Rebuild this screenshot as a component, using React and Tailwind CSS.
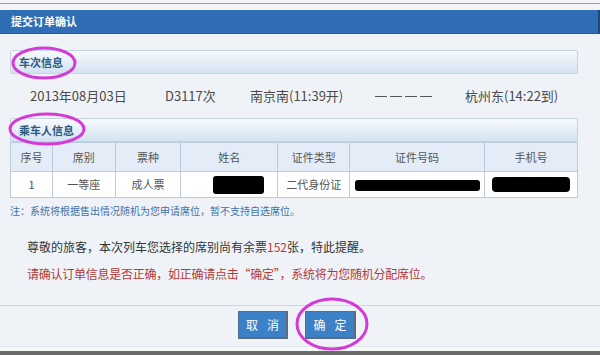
import React from "react";

const font = { fontFamily: '"Noto Sans CJK SC", "Noto Sans", sans-serif' };

function SectionHeader({ children }) {
  return (
    <div className="h-[24px] border border-[#c5d3e2] rounded-[2px] bg-gradient-to-b from-[#f7fafd] to-[#d3e2f1] flex items-center pl-[8px]">
      <span className="text-[11px] font-bold text-[#2c5b82] leading-none">{children}</span>
    </div>
  );
}

export default function App() {
  const cols = ["w-[42px]", "w-[63px]", "w-[66px]", "w-[97px]", "w-[72px]", "w-[135px]", "w-[93px]"];
  const heads = ["序号", "席别", "票种", "姓名", "证件类型", "证件号码", "手机号"];
  return (
    <div className="relative w-[600px] h-[355px] overflow-hidden bg-[#eff3f8]" style={font}>
      <div className="h-[3px] bg-[#f6f6f6]" />
      <div className="h-[1px] bg-[#9aa0a6]" />
      <div className="h-[6px] bg-[#f3f5f8]" />
      <div className="h-[24px] bg-[#2f6eb5] border-b border-[#265a96] border-r-2 border-r-[#1f4878] flex items-center pl-[11px]">
        <span className="text-[11px] font-bold text-white leading-none">提交订单确认</span>
      </div>
      <div className="px-[10px] pr-[22px] pt-[16px]">
        <SectionHeader>车次信息</SectionHeader>
        <div className="h-[44px] flex items-center pl-[20px] text-[13px] text-[#4a4a4a] whitespace-nowrap">
          <span className="w-[135px] shrink-0">2013年08月03日</span>
          <span className="w-[85px] shrink-0">D3117次</span>
          <span className="w-[125px] shrink-0">南京南(11:39开)</span>
          <span className="w-[90px] shrink-0 flex gap-[3px] items-center">
            <span className="w-[12px] h-[1px] bg-[#555]" />
            <span className="w-[12px] h-[1px] bg-[#555]" />
            <span className="w-[12px] h-[1px] bg-[#555]" />
            <span className="w-[12px] h-[1px] bg-[#555]" />
          </span>
          <span>杭州东(14:22到)</span>
        </div>
        <SectionHeader>乘车人信息</SectionHeader>
        <table className="border-collapse text-[11px] text-[#555]">
          <tbody>
            <tr className="h-[29px] bg-[#e4edf7]">
              {heads.map((h, i) => (
                <td key={h} className={`${cols[i]} border border-[#bccbdb] text-center p-0`}>{h}</td>
              ))}
            </tr>
            <tr className="h-[26px] bg-white">
              <td className="border border-[#bccbdb] text-center p-0">1</td>
              <td className="border border-[#bccbdb] text-center p-0">一等座</td>
              <td className="border border-[#bccbdb] text-center p-0">成人票</td>
              <td className="border border-[#bccbdb] text-center p-0 leading-none"><span className="inline-block w-[51px] h-[18px] bg-black rounded-[3px] ml-[18px] align-middle" /></td>
              <td className="border border-[#bccbdb] text-center p-0">二代身份证</td>
              <td className="border border-[#bccbdb] text-center p-0 leading-none"><span className="inline-block w-[125px] h-[11px] bg-black rounded-[3px] align-middle" /></td>
              <td className="border border-[#bccbdb] text-center p-0 leading-none"><span className="inline-block w-[78px] h-[15px] bg-black rounded-[4px] align-middle" /></td>
            </tr>
          </tbody>
        </table>
        <div className="mt-[6px] text-[10px] text-[#3f72a8] leading-[14px]">注：系统将根据售出情况随机为您申请席位，暂不支持自选席位。</div>
      </div>
      <div className="pl-[27px] mt-[21px] text-[12px] text-[#333] leading-[16px]">
        尊敬的旅客，本次列车您选择的席别尚有余票<span className="text-[#c0392b]">152</span>张，特此提醒。
      </div>
      <div className="pl-[27px] mt-[11px] text-[12px] text-[#b23a3a] leading-[16px] tracking-[-0.25px]">
        请确认订单信息是否正确，如正确请点击“确定”，系统将为您随机分配席位。
      </div>
      <div className="mt-[23px] h-[1px] bg-[#d4d8dd]" />
      <div className="flex justify-center gap-[17px] pt-[5px] mr-[6px]">
        <button className="w-[50px] h-[28px] flex items-center justify-center gap-[9px] bg-[#3c80c7] border border-[#4f6f90] border-r-2 border-b-2 border-r-[#5a6b7c] border-b-[#5a6b7c] text-white text-[12px] whitespace-nowrap">
          <span>取</span><span>消</span>
        </button>
        <button className="w-[51px] h-[28px] flex items-center justify-center gap-[9px] bg-[#3c80c7] border border-[#4f6f90] border-r-2 border-b-2 border-r-[#5a6b7c] border-b-[#5a6b7c] text-white text-[12px] whitespace-nowrap">
          <span>确</span><span>定</span>
        </button>
      </div>
      <div className="absolute left-0 right-0 bottom-0 h-[9px] bg-[#f7f8f8] border-t border-[#e2e5e8]">
        <div className="absolute bottom-0 left-0 right-0 h-[4px] bg-[#6b6b6b]" />
      </div>
      <svg className="absolute inset-0 pointer-events-none" width="600" height="355">
        <ellipse cx="44" cy="63" rx="31" ry="15" fill="none" stroke="#d43bd6" strokeWidth="3" />
        <ellipse cx="47" cy="129" rx="37" ry="15" fill="none" stroke="#d43bd6" strokeWidth="3" />
        <ellipse cx="332" cy="324" rx="35" ry="25" fill="none" stroke="#d43bd6" strokeWidth="3" />
      </svg>
    </div>
  );
}
